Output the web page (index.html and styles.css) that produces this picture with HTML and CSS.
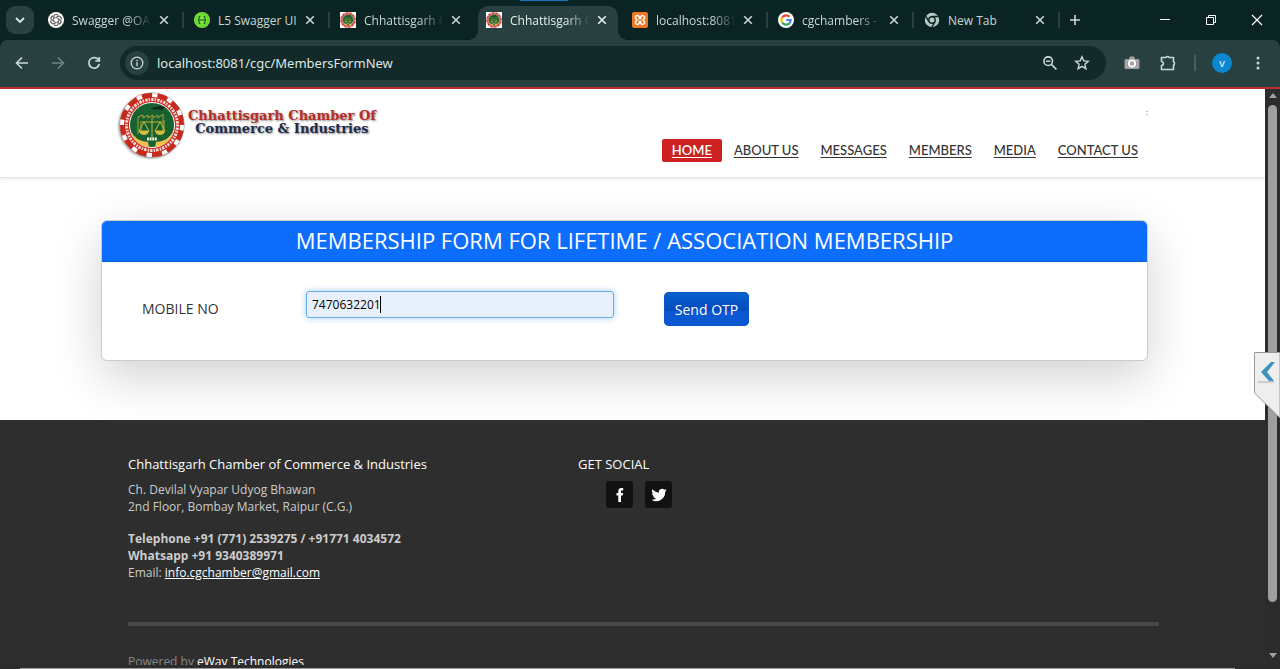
FILE: index.html
```html
<!DOCTYPE html>
<html lang="en">
<head>
<meta charset="utf-8">
<title>Chhattisgarh Chamber of Commerce</title>
<link rel="stylesheet" href="styles.css">
</head>
<body>
<svg class="defs" aria-hidden="true">
  <symbol id="close" viewBox="0 0 10 10"><path d="M1.2 1.2l7.6 7.6M8.800 1.200l-7.600 7.600" fill="none" stroke="currentColor" stroke-width="1.6"/></symbol>
  <symbol id="emblem" viewBox="0 0 66 66">
    <circle cx="33" cy="33" r="32" fill="#fff" stroke="#9c8b83" stroke-width="1"/>
    <circle cx="33" cy="33" r="27" fill="none" stroke="#c8291f" stroke-width="10"/>
    <circle cx="33" cy="33" r="30" fill="none" stroke="#fff" stroke-width="4" stroke-dasharray="5.400 10.300"/>
    <circle cx="33" cy="33" r="25.500" fill="none" stroke="#f6ddd6" stroke-width="3" stroke-dasharray="1.500 1.200 2.400 1"/>
    <circle cx="33" cy="33" r="22.500" fill="#17602f" stroke="#fff" stroke-width="1"/>
    <path d="M31 17q8-4 15-2l-3 3q-6-1-12-1z" fill="#17251b"/>
    <path d="M19 42V25l5-2v3l5-3v3l5-3v3l5-3v3l5-4v20M22 40V29M45 39V28" fill="none" stroke="#a9a43c" stroke-width="1"/>
    <path d="M33 26v20M23 30h20M25 30l-5 9h10zM41 30l-5 9h10z" fill="none" stroke="#c9b840" stroke-width="1"/>
    <path d="M20 39h10q-1 4-5 4t-5-4zM36 39h10q-1 4-5 4t-5-4z" fill="#d3bd3b"/>
    <path d="M12 39q4 10 17 11l1 5q-14-1-18-16zM54 39q-4 10-17 11l-1 5q14-1 18-16z" fill="#efc04e"/>
    <path d="M28 47h10" stroke="#e8f1df" stroke-width="3" stroke-dasharray="2 .6"/>
  </symbol>
</svg>

<header class="browser">
  <div class="tabstrip">
    <button class="tab-search" aria-label="Search tabs"><svg width="12" height="12" viewBox="0 0 12 12"><path d="M2 4l4 4 4-4" fill="none" stroke="#dce8e5" stroke-width="1.8"/></svg></button>
    <div class="tabs">
      <div class="tab sep">
        <svg class="favicon" viewBox="0 0 16 16"><circle cx="8" cy="8" r="8" fill="#fff"/><g fill="none" stroke="#444" stroke-width=".7"><path id="p" d="M6 6.500V4.500a2.300 2.300 0 0 1 4.200-1.200M6 6.500l3.600-2.100a2.300 2.300 0 0 1 3.200 3"/><use href="#p" transform="rotate(60 8 8)"/><use href="#p" transform="rotate(120 8 8)"/><use href="#p" transform="rotate(180 8 8)"/><use href="#p" transform="rotate(240 8 8)"/><use href="#p" transform="rotate(300 8 8)"/></g></svg>
        <span class="tab-title fade">Swagger @OA</span><button class="tab-close" aria-label="Close tab"><svg><use href="#close"/></svg></button>
      </div>
      <div class="tab sep">
        <svg class="favicon" viewBox="0 0 16 16"><circle cx="8" cy="8" r="8" fill="#7be63c"/><circle cx="8" cy="8" r="6.300" fill="none" stroke="#4aa825" stroke-width=".6"/><path d="M6.500 4.200c-2 0-1.300 1.200-1.400 2.400 0 .9-.5 1.300-1.100 1.400.6.100 1.100.5 1.100 1.400.1 1.200-.6 2.400 1.400 2.400M9.500 4.200c2 0 1.300 1.200 1.400 2.400 0 .9.500 1.300 1.100 1.400-.6.100-1.100.5-1.100 1.400-.1 1.200.6 2.400-1.400 2.400M5.500 8h5" fill="none" stroke="#1c4a20" stroke-width="1.100"/></svg>
        <span class="tab-title">L5 Swagger UI</span><button class="tab-close" aria-label="Close tab"><svg><use href="#close"/></svg></button>
      </div>
      <div class="tab">
        <svg class="favicon square"><use href="#emblem"/></svg>
        <span class="tab-title fade">Chhattisgarh C</span><button class="tab-close" aria-label="Close tab"><svg><use href="#close"/></svg></button>
      </div>
      <div class="tab active">
        <svg class="favicon square"><use href="#emblem"/></svg>
        <span class="tab-title fade">Chhattisgarh C</span><button class="tab-close" aria-label="Close tab"><svg><use href="#close"/></svg></button>
      </div>
      <div class="tab sep">
        <svg class="favicon" viewBox="0 0 16 16"><rect width="16" height="16" rx="2" fill="#f37623"/><path d="M5.300 3.500a2 2 0 0 0-1 3.700L5 8l-.7.8a2 2 0 1 0 3 2.400V9.500h1.400v1.700a2 2 0 1 0 3-2.400L11 8l.7-.8a2 2 0 1 0-3-2.400v1.700H7.300V4.800a2 2 0 0 0-2-1.300z" fill="none" stroke="#fff" stroke-width="1.500"/></svg>
        <span class="tab-title fade">localhost:8081</span><button class="tab-close" aria-label="Close tab"><svg><use href="#close"/></svg></button>
      </div>
      <div class="tab sep">
        <svg class="favicon" viewBox="0 0 16 16"><circle cx="8" cy="8" r="8" fill="#fff"/><g fill="none" stroke-width="2.200"><path d="M11.500 4.800A4.700 4.700 0 0 0 4.200 5.300" stroke="#ea4335"/><path d="M4.200 5.300a4.700 4.700 0 0 0 0 5.200" stroke="#fbbc05"/><path d="M4.200 10.500a4.700 4.700 0 0 0 6.900 1.100" stroke="#34a853"/><path d="M11.100 11.600A4.700 4.700 0 0 0 12.700 8H8.200" stroke="#4285f4"/></g></svg>
        <span class="tab-title fade">cgchambers -</span><button class="tab-close" aria-label="Close tab"><svg><use href="#close"/></svg></button>
      </div>
      <div class="tab sep">
        <svg class="favicon" viewBox="0 0 16 16"><circle cx="8" cy="8" r="7.200" fill="#b7c9c5"/><circle cx="8" cy="8" r="3.200" fill="#b7c9c5" stroke="#0a2525" stroke-width="1.400"/><path d="M8 4.500h6.500M4.900 9.700L1.700 4.200M11 9.800l-3.200 5.500" stroke="#0a2525" stroke-width="1.300"/></svg>
        <span class="tab-title">New Tab</span><button class="tab-close" aria-label="Close tab"><svg><use href="#close"/></svg></button>
      </div>
    </div>
    <button class="new-tab" aria-label="New tab"><svg width="12" height="12" viewBox="0 0 12 12"><path d="M6 1v10M1 6h10" stroke="#c9d8d5" stroke-width="1.600"/></svg></button>
    <div class="window-controls">
      <button aria-label="Minimize"><svg width="12" height="12" viewBox="0 0 12 12"><path d="M1 5.500h10" stroke="#fff"/></svg></button>
      <button aria-label="Restore"><svg width="12" height="12" viewBox="0 0 12 12"><path d="M1.500 3.500h7v7h-7zM3.500 3.500v-2h7v7h-2" fill="none" stroke="#fff"/></svg></button>
      <button aria-label="Close"><svg width="12" height="12" viewBox="0 0 12 12"><path d="M1 1l10 10M11 1L1 11" stroke="#fff" stroke-width="1.200"/></svg></button>
    </div>
  </div>
  <div class="toolbar">
    <button aria-label="Back"><svg width="16" height="16" viewBox="0 0 16 16"><path d="M14 8H3M8 2.500L2.500 8 8 13.500" fill="none" stroke="#c9d8d5" stroke-width="1.600"/></svg></button>
    <button aria-label="Forward"><svg width="16" height="16" viewBox="0 0 16 16"><path d="M2 8h11M8 2.500L13.500 8 8 13.500" fill="none" stroke="#6f8683" stroke-width="1.600"/></svg></button>
    <button aria-label="Reload"><svg width="16" height="16" viewBox="0 0 16 16"><path d="M12.600 5A5.300 5.300 0 1 0 13.300 9M13.300 2v4H9.300" fill="none" stroke="#c9d8d5" stroke-width="1.700"/></svg></button>
    <div class="omnibox">
      <button class="site-info" aria-label="Site information"><svg width="14" height="14" viewBox="0 0 14 14"><circle cx="7" cy="7" r="5.800" fill="none" stroke="#c9d8d5" stroke-width="1.300"/><path d="M7 6.200v4M7 3.700v1.500" stroke="#c9d8d5" stroke-width="1.400"/></svg></button>
      <input class="url" type="text" aria-label="Address" value="localhost:8081/cgc/MembersFormNew">
      <button class="omni-btn" aria-label="Zoom"><svg width="16" height="16" viewBox="0 0 16 16"><circle cx="6.200" cy="6.200" r="4.300" fill="none" stroke="#c9d8d5" stroke-width="1.600"/><path d="M9.400 9.400l5 5M4 6.200h4.400" stroke="#c9d8d5" stroke-width="1.600"/></svg></button>
      <button class="omni-btn" aria-label="Bookmark"><svg width="16" height="16" viewBox="0 0 16 16"><path d="M8 1.800l1.800 4.100 4.500.4-3.400 3 1 4.400L8 11.400l-3.900 2.300 1-4.400-3.400-3 4.500-.4z" fill="none" stroke="#c9d8d5" stroke-width="1.400"/></svg></button>
    </div>
    <div class="actions">
      <button aria-label="Screenshot"><svg width="16" height="16" viewBox="0 0 16 16"><path d="M2 4h3l1-2.500h4L11 4h3q1.500 0 1.500 1.500v7Q15.500 14 14 14H2Q.5 14 .5 12.500v-7Q.5 4 2 4z" fill="#a3a3a3"/><circle cx="8" cy="8.500" r="3.200" fill="#a3a3a3" stroke="#fff" stroke-width="1.800"/></svg></button>
      <button aria-label="Extensions"><svg width="18" height="18" viewBox="0 0 18 18"><path d="M2.500 3.500H7a1.500 1 0 0 1 3 0h4.500V8a1 1.500 0 0 1 0 3v4.500h-12v-4q2-.3 2-2t-2-2z" fill="none" stroke="#c9d8d5" stroke-width="1.600" stroke-linejoin="round"/></svg></button>
      <span class="divider"></span>
      <button class="avatar" aria-label="Profile">v</button>
      <button aria-label="Menu"><svg width="4" height="16" viewBox="0 0 4 16" fill="#c9d8d5"><circle cx="2" cy="3" r="1.500"/><circle cx="2" cy="8" r="1.500"/><circle cx="2" cy="13" r="1.500"/></svg></button>
    </div>
  </div>
</header>

<div class="viewport">
  <div class="page">
    <header class="site-header">
      <a class="brand" href="#">
        <svg class="brand-mark"><use href="#emblem"/></svg>
        <span class="brand-text"><span class="brand-top">Chhattisgarh Chamber Of</span><span class="brand-bottom">Commerce &amp; Industries</span></span>
      </a>
      <div class="header-side">
        <span class="header-note">:</span>
        <nav class="nav">
          <a class="current" href="#">HOME</a>
          <a href="#">ABOUT US</a>
          <a href="#">MESSAGES</a>
          <a href="#">MEMBERS</a>
          <a href="#">MEDIA</a>
          <a href="#">CONTACT US</a>
        </nav>
      </div>
    </header>

    <main class="content">
      <form class="card">
        <h1 class="card-title">MEMBERSHIP FORM FOR LIFETIME / ASSOCIATION MEMBERSHIP</h1>
        <div class="card-body">
          <label for="mobile">MOBILE NO</label>
          <div class="field"><input id="mobile" type="text" value="7470632201"><span class="caret"></span></div>
          <button class="send" type="button">Send OTP</button>
        </div>
      </form>
    </main>

    <footer class="footer">
      <div class="footer-cols">
        <section>
          <h2>Chhattisgarh Chamber of Commerce &amp; Industries</h2>
          <p>Ch. Devilal Vyapar Udyog Bhawan<br>2nd Floor, Bombay Market, Raipur (C.G.)</p>
          <p><strong>Telephone +91 (771) 2539275 / +91771 4034572<br>Whatsapp +91 9340389971</strong><br>Email: <a href="#">info.cgchamber@gmail.com</a></p>
        </section>
        <section>
          <h2>GET SOCIAL</h2>
          <div class="social">
            <a href="#" aria-label="Facebook"><svg width="16" height="16" viewBox="0 0 16 16"><path d="M6.300 15V8.500H4.500V6h1.800V4.400C6.300 2.200 7.400 1 9.400 1h1.800v2.500h-1.200c-.8 0-1 .3-1 1V6h2.100l-.3 2.500H9V15z" fill="#fff"/></svg></a>
            <a href="#" aria-label="Twitter"><svg width="16" height="16" viewBox="0 0 24 24"><path d="M23.600 4.900c-.8.400-1.700.6-2.700.8 1-.6 1.700-1.500 2-2.600-.9.500-1.900.9-3 1.100a4.700 4.700 0 0 0-8 4.300C8 8.300 4.500 6.400 2.200 3.500a4.700 4.700 0 0 0 1.400 6.300c-.7 0-1.500-.2-2.100-.6 0 2.300 1.600 4.200 3.800 4.700-.7.200-1.400.2-2.100.1.600 1.800 2.300 3.200 4.400 3.200A9.500 9.500 0 0 1 .6 19.100 13.400 13.400 0 0 0 21.200 7.300c1-.7 1.800-1.500 2.400-2.400z" fill="#fff"/></svg></a>
          </div>
        </section>
      </div>
      <p class="credit">Powered by <a href="#">eWay Technologies</a></p>
    </footer>
  </div>
  <div class="scrollbar"><span class="arrow up"></span><span class="thumb"></span><span class="arrow down"></span></div>
  <button class="side-tab" aria-label="Open panel"><svg width="26" height="67" viewBox="0 0 26 67"><path d="M.5 41V.5H26V66z" fill="#eee" stroke="#999"/><path d="M17 10L7 20l8 9h5l-7-9 8-10z" fill="#3d93bd"/><path d="M4 30h16" stroke="#aaa"/></svg></button>
</div>
<div class="hscroll"><span></span></div>
</body>
</html>
```
FILE: styles.css
```css
* { box-sizing: border-box; }
body {
  margin: 0;
  height: 100vh;
  overflow: hidden;
  display: flex;
  flex-direction: column;
  font-family: "Open Sans", "Noto Sans", sans-serif;
  background: #2e2e2e;
}
button { border: 0; padding: 0; background: none; font: inherit; color: inherit; display: grid; place-items: center; }
h1, h2, p { margin: 0; font-weight: 400; }
.defs { position: absolute; width: 0; height: 0; }

.browser { background: #0a2323; border-bottom: 2px solid #b92f2f; flex: none; }
.tabstrip { height: 40px; display: flex; align-items: center; padding-left: 6px; position: relative; }
.tabstrip::before { content: ""; position: absolute; top: 0; left: 520px; width: 48px; height: 1px; background: #1c74c4; }
.tab-search { width: 28px; height: 28px; border-radius: 9px; background: #284140; margin-right: 6px; flex: none; }
.tabs { display: flex; gap: 6px; align-self: stretch; padding-top: 6px; }
.tab { position: relative; width: 140px; display: flex; align-items: center; padding: 0 8px 6px; color: #c9d8d5; font-size: 12px; }
.tab.sep::after { content: ""; position: absolute; right: -4px; top: 6px; width: 2px; height: 16px; background: #284140; }
.tab.active { background: #284140; border-radius: 10px 10px 0 0; color: #e6f0ee; }
.tab.active::before, .tab.active::after { content: ""; position: absolute; bottom: 0; width: 10px; height: 10px; }
.tab.active::before { left: -10px; background: radial-gradient(circle at 0 0, transparent 10px, #284140 10px); }
.tab.active::after { right: -10px; background: radial-gradient(circle at 100% 0, transparent 10px, #284140 10px); }
.favicon { width: 16px; height: 16px; margin-right: 8px; flex: none; }
.favicon.square { background: #fff; }
.tab-title { flex: 1; min-width: 0; white-space: nowrap; }
.tab-title.fade { -webkit-mask: linear-gradient(90deg, #000 56px, transparent 80px); mask: linear-gradient(90deg, #000 56px, transparent 80px); }
.tab-close { width: 16px; height: 16px; }
.tab-close svg { width: 10px; height: 10px; }
.new-tab { width: 28px; height: 28px; margin-left: 5px; }
.window-controls { margin-left: auto; display: flex; }
.window-controls button { width: 46px; height: 40px; }

.toolbar { display: flex; align-items: center; height: 47px; padding: 0 8px 1px 4px; background: #284140; border-radius: 8px 8px 0 0; }
.toolbar > button { width: 36px; height: 34px; flex: none; }
.omnibox { flex: 1; display: flex; align-items: center; height: 34px; margin-left: 8px; padding: 0 8px 0 5px; border-radius: 17px; background: #122a29; }
.site-info { width: 24px; height: 24px; border-radius: 50%; background: #284140; flex: none; }
.url { flex: 1; min-width: 0; border: 0; outline: 0; margin-left: 8px; padding: 0; background: none; font: 13px/20px "Noto Sans", sans-serif; color: #dce8e5; }
.omni-btn { width: 32px; height: 32px; }
.actions { display: flex; align-items: center; margin-left: 8px; }
.actions button { width: 36px; height: 34px; }
.actions button:last-child { width: 28px; }
.divider { width: 2px; height: 16px; margin: 0 8px; background: #47605e; }
.actions .avatar { width: 20px; height: 20px; margin: 0 12px 0 8px; border-radius: 50%; background: #0b87d0; color: #fff; font-size: 11px; line-height: 20px; }

.viewport { flex: 1; min-height: 0; display: flex; position: relative; }
.page { flex: 1; min-width: 0; overflow: hidden; background: #fff; }
.site-header { display: flex; justify-content: space-between; height: 89px; padding: 3px 117px 0 118px; border-bottom: 1px solid #e4e4e4; box-shadow: 0 1px 4px rgba(0, 0, 0, .1); }
.brand { display: flex; gap: 2px; text-decoration: none; }
.brand-mark { width: 68px; height: 66px; filter: drop-shadow(-1px 1px 1px #999); }
.brand-text { display: flex; flex-direction: column; align-items: center; padding-top: 17px; font: bold 13px/13px "DejaVu Serif", serif; text-shadow: 1px 1px 2px #888; }
.brand-top { color: #b92c2a; }
.brand-bottom { color: #1d2c4c; }
.header-side { display: flex; flex-direction: column; align-items: flex-end; padding-top: 13px; }
.header-note { font-size: 8px; line-height: 14px; color: #555; }
.nav { display: flex; gap: 2px; margin-top: 20px; }
.nav a { padding: 0 10px; font: 500 13px/23px Lato, sans-serif; color: #333; border-radius: 2px; text-underline-offset: 2px; }
.nav .current { background: #cd2122; color: #fff; font-weight: 600; }

.content { padding: 42px 117px 59px 101px; }
.card { border: 1px solid #ccc; border-radius: 6px; background: #fff; box-shadow: 0 16px 48px rgba(0, 0, 0, .18); }
.card-title { padding: 3px 16px 5px; border-bottom: 1px solid #0b5bd8; border-radius: 5px 5px 0 0; background: #0d6efd; color: #fff; font-size: 22px; line-height: 32px; text-align: center; }
.card-body { display: grid; grid-template-columns: 164px 308px 135px; align-items: start; padding: 29px 40px 33px; font-size: 14px; color: #333; }
.card-body label { line-height: 36px; }
.field { position: relative; }
.field input { display: block; width: 100%; height: 27px; padding: 0 5px; border: 1px solid #66afe9; border-radius: 3px; outline: 0; background: #e8f0fe; box-shadow: 0 0 6px rgba(102, 175, 233, .6); font: 12px/20px "Open Sans", sans-serif; color: #000; }
.caret { position: absolute; left: 74px; top: 5px; width: 1px; height: 17px; background: #000; }
.send { height: 34px; margin: 1px 0 0 50px; width: 85px; border-radius: 5px; color: #fff; background: linear-gradient(#0763cd 0, #0548bf 55%, #0a58d4 56%, #0a58d0 100%); box-shadow: inset 0 0 0 1px #0a58c4; }

.footer { background: #2e2e2e; color: #ccc; font-size: 12px; line-height: 17px; padding: 36px 106px 40px 128px; }
.footer-cols { display: grid; grid-template-columns: 450px 1fr; padding-bottom: 41px; border-bottom: 4px solid #484848; }
.footer h2 { margin-bottom: 8px; color: #fff; font-size: 13px; }
.footer p + p { margin-top: 15px; }
.footer a { color: #fff; }
.social { display: flex; gap: 12px; padding-left: 28px; }
.social a { width: 27px; height: 27px; display: grid; place-items: center; border-radius: 3px; background: #111; }
.footer .credit { padding-top: 27px; color: #888; }
.credit a { text-decoration: none; }

.scrollbar { width: 15px; flex: none; display: flex; flex-direction: column; align-items: center; padding: 4px 0 7px; background: #2c2c2c; }
.arrow { border: 4px solid transparent; border-top: 0; border-bottom: 5px solid #9f9f9f; }
.arrow.down { border-top: 5px solid #9f9f9f; border-bottom: 0; }
.thumb { width: 9px; flex: 0 0 88%; margin: 7px 0 auto; border-radius: 5px; background: #9f9f9f; }
.side-tab { position: absolute; right: 0; top: 263px; }
.side-tab svg { display: block; }
.hscroll { flex: none; height: 4px; display: flex; align-items: flex-end; padding: 0 45px 0 20px; background: #2c2c2c; }
.hscroll span { flex: 1; height: 1px; background: #9f9f9f; }
```
